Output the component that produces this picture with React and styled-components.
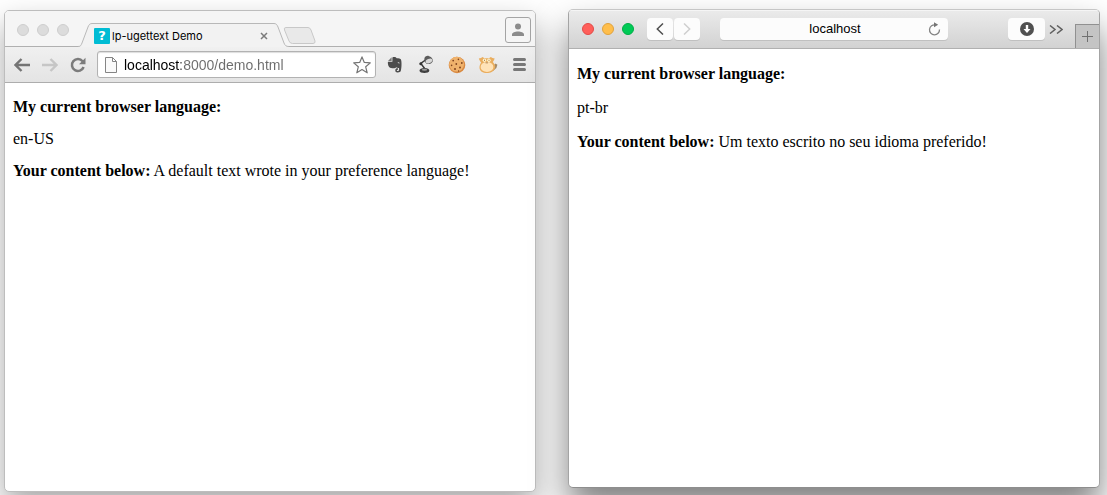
import React from 'react';
import styled, { createGlobalStyle } from 'styled-components';

const GlobalStyle = createGlobalStyle`
  *, *::before, *::after { box-sizing: border-box; }
  body { margin: 0; background: #fff; overflow: hidden; }
  button, input { font: inherit; }
  svg { display: block; flex: none; }
`;

const Desktop = styled.div`
  display: grid;
  grid-template-columns: 1fr 1fr;
  gap: 32px;
  min-height: 100vh;
  padding: 9px 7px 3px 4px;
`;

const BrowserWindow = styled.section`
  display: flex;
  flex-direction: column;
  min-width: 0;
  overflow: hidden;
  background: #fff;
  border: 1px solid #bdbdbd;
  border-radius: 5px;
`;

const ChromeWindow = styled(BrowserWindow)`
  margin-top: 1px;
  box-shadow: 0 14px 30px rgba(0, 0, 0, 0.34);
`;

const SafariWindow = styled(BrowserWindow)`
  margin-bottom: 4px;
  border-color: #c6c6c6 #a4a4a4 #8e8e8e;
  box-shadow: 0 20px 34px rgba(0, 0, 0, 0.5);
`;

const TabStrip = styled.div`
  display: flex;
  align-items: flex-end;
  height: 36px;
  background: #f5f5f5;
  box-shadow: inset 0 -1px #b0b0b0;
`;

const Lights = styled.div`
  display: flex;
  align-items: center;
  align-self: stretch;
  gap: 8px;
  flex: none;
`;

const ChromeLights = styled(Lights)`
  padding: 2px 9px 0 12px;
`;

const Light = styled.button`
  width: 12px;
  height: 12px;
  padding: 0;
  border: 1px solid ${(p) => p.$edge};
  border-radius: 50%;
  background: ${(p) => p.$fill};
`;

const Tab = styled.div`
  display: flex;
  height: 24px;
`;

const TabBody = styled.div`
  display: flex;
  align-items: center;
  width: 182px;
  padding: 0 6px 0 2px;
  border-top: 1px solid #b8b8b8;
  background: #f2f2f2;
  font: 11px/16px Inter, "Liberation Sans", sans-serif;
  color: #000;
`;

const Favicon = styled.span`
  width: 16px;
  height: 16px;
  margin-right: 2px;
  border-radius: 1px;
  background: #00bcd4;
  color: #fff;
  font: bold 13px/16px "DejaVu Sans", sans-serif;
  text-align: center;
`;

const IconButton = styled.button`
  display: flex;
  align-items: center;
  justify-content: center;
  flex: none;
  padding: 0;
  border: 0;
  background: none;
`;

const CloseTab = styled(IconButton)`
  margin-left: auto;
`;

const NewTab = styled(IconButton)`
  align-self: flex-end;
  margin: 0 0 3px -6px;
`;

const Profile = styled(IconButton)`
  align-self: center;
  width: 26px;
  height: 26px;
  margin: 1px 4px 0 auto;
  border: 1px solid #a4a4a4;
  border-radius: 3px;
`;

const Toolbar = styled.div`
  display: flex;
  align-items: center;
  height: 36px;
  padding: 0 1px 0 8px;
  background: linear-gradient(#f0f0f0, #e4e4e4);
  border-bottom: 1px solid #adadad;
`;

const Navigation = styled.div`
  display: flex;
  gap: 10px;
  margin-right: 10px;
`;

const NavButton = styled(IconButton)`
  width: 18px;
  height: 20px;
`;

const Omnibox = styled.label`
  display: flex;
  align-items: center;
  flex: 1;
  min-width: 0;
  height: 27px;
  padding: 0 4px 0 7px;
  border: 1px solid #b2b2b2;
  border-radius: 3px;
  background: #fff;
  box-shadow: inset 0 1px 1px #ddd;
`;

const UrlInput = styled.input`
  flex: 1;
  min-width: 0;
  margin-left: 7px;
  padding: 0;
  border: 0;
  outline: 0;
  font: 14px/20px "Liberation Sans", Arial, sans-serif;
  color: transparent;
  background: linear-gradient(to right, #000 57px, #6c6c6c 57px);
  background-clip: text;
`;

const Extensions = styled.div`
  display: flex;
  margin-left: 4px;
  gap: 1px;
`;

const ExtensionButton = styled(IconButton)`
  width: 30px;
  height: 24px;
`;

const Page = styled.main`
  flex: 1;
  padding: 0 8px;
  font: 16px/${(p) => p.$line} "Liberation Serif", "Times New Roman", serif;
  color: #000;

  p { margin: 16px 0; }
`;

const TitleBar = styled.div`
  display: flex;
  height: 39px;
  background: linear-gradient(#ebebeb, #d2d2d2);
  border-bottom: 1px solid #b0b0b0;
  box-shadow: inset 0 1px #f5f5f5;
`;

const Side = styled.div`
  display: flex;
  align-items: center;
  flex: 1;
  justify-content: ${(p) => p.$justify};
`;

const SafariLights = styled(Lights)`
  padding: 0 13px;
`;

const SafariButton = styled(IconButton)`
  width: ${(p) => p.$width};
  height: 22px;
  margin-right: 1px;
  border-radius: 4px;
  background: #fcfcfc;
  box-shadow: 0 1px #c0c0c0;
`;

const AddressBar = styled.div`
  display: flex;
  align-items: center;
  align-self: center;
  width: 43%;
  height: 22px;
  padding: 0 7px 0 22px;
  border-radius: 4px;
  background: #fcfcfc;
  box-shadow: 0 1px #c0c0c0;
`;

const AddressInput = styled.input`
  flex: 1;
  min-width: 0;
  padding: 0;
  border: 0;
  outline: 0;
  background: none;
  font: 13px/18px "Liberation Sans", Arial, sans-serif;
  color: #000;
  text-align: center;
`;

const MoreButton = styled(IconButton)`
  width: 20px;
  height: 22px;
  margin-right: 9px;
`;

const SafariNewTab = styled(IconButton)`
  align-self: flex-end;
  width: 24px;
  height: 24px;
  border: solid #909090;
  border-width: 1px 0 0 1px;
  background: #c4c4c4;
`;

function Arrow({ color, flip }) {
  return (
    <svg width="16" height="14" viewBox="0 0 16 14" fill="none" stroke={color} strokeWidth="2.4">
      <path d={flip ? 'M0 7H14M8.5 1l6 6-6 6' : 'M16 7H2M7.5 1l-6 6 6 6'} />
    </svg>
  );
}

function ReloadIcon() {
  return (
    <svg width="16" height="16" viewBox="0 0 16 16">
      <path d="M12.6 4.2A6 6 0 1 0 13.6 10" fill="none" stroke="#7c7c7c" strokeWidth="2.5" />
      <path d="M15.5 0.8V7.3H9z" fill="#7c7c7c" />
    </svg>
  );
}

function DocumentIcon() {
  return (
    <svg width="12" height="16" viewBox="0 0 12 16" fill="#fafafa" stroke="#858585">
      <path d="M.5.5h7l4 4v11H.5zM7.5.5v4h4" />
    </svg>
  );
}

function StarIcon() {
  return (
    <svg width="18" height="18" viewBox="0 0 18 18" fill="#fff" stroke="#757575" strokeWidth="1.2" strokeLinejoin="round">
      <path d="M9 .9l2.3 5.5 6 .5-4.6 3.9 1.5 6L9 13.6l-5.2 3.2 1.5-6L.7 6.9l6-.5z" />
    </svg>
  );
}

function ElephantIcon() {
  return (
    <svg width="16" height="18" viewBox="0 0 16 18">
      <path d="M4.6 1.2L1 5h3.6z" fill="#777" />
      <path d="M5.4 1.5c2-.9 3.6-.2 4.3.7 2 .1 3.8.2 4.3 1.4.7 2 .8 7.2-.1 11-.4 1.6-1.7 2-3.5 1.9-1.6-.1-2.2-1-2.1-2.3.1-1.4 1-2 2.7-1.8v1.3c-.9-.1-1.3.1-1.2.7.1.5.6.6 1.4.5.9-.2 1-1.5.8-3-.8.3-2 .1-2.8-.6-.7 1.1-3 1.1-5.2.7C1.500 11.7.7 8.5.9 5.8h4.5z" fill="#4c4c4c" />
      <path d="M10.5 7c.2-1.2 2-1.2 2.2.5-.6-.3-1.4-.4-2.2-.5z" fill="#ddd" />
    </svg>
  );
}

function LampIcon() {
  return (
    <svg width="17" height="19" viewBox="0 0 17 19">
      <path d="M7.500 5L2.800 8.500l4.200 5.500" fill="none" stroke="#383838" strokeWidth="1.5" />
      <circle cx="2.8" cy="8.7" r="1.5" fill="#333" />
      <path d="M6.3 4C6.5 1.500 9.500.2 11 1.2c2.500.5 4.300 3 3.700 5.200-.9 2.400-4.800 3.500-6.500 2C7.100 7.500 6.300 5.600 6.300 4z" fill="#5c5c5c" />
      <ellipse cx="11" cy="6" rx="3.5" ry="2.2" transform="rotate(-25 11 6)" fill="#d8d8d8" />
      <path d="M1.500 15.8c0-1.900 2-2.700 5-2.700s4.800.9 4.800 2.700c0 3-9.800 3-9.800 0z" fill="#404040" />
      <ellipse cx="6.500" cy="14.8" rx="2.7" ry="1" fill="#999" />
    </svg>
  );
}

function CookieIcon() {
  return (
    <svg width="18" height="18" viewBox="0 0 18 18">
      <circle cx="9" cy="9" r="8.3" fill="#d98a42" />
      <circle cx="8.600" cy="8.200" r="7.4" fill="#efb26c" />
      <g fill="#80451f">
        <circle cx="5.2" cy="4.6" r=".9" /><circle cx="10.4" cy="3.4" r=".8" />
        <circle cx="13.8" cy="7" r=".9" /><circle cx="8.3" cy="8" r=".9" />
        <circle cx="3.6" cy="9.4" r=".8" /><circle cx="12" cy="11.6" r="1" />
        <circle cx="7" cy="13" r="1" /><circle cx="10.600" cy="15" r=".7" />
      </g>
    </svg>
  );
}

function CatIcon() {
  return (
    <svg width="20" height="18" viewBox="0 0 20 18">
      <path d="M15 10l2.500-2.500 1.900 1.200-1 3.300-3.400 3z" fill="#a58b68" />
      <path d="M.8 2.500L3 2l1.500-1 2 1.200h4.500L12.800 1l1.700 1 2.200.5-.9 2-1 1.500c2 1.700 2.900 4 2 6.500-1 3-4.300 4.600-8 4.600-4 0-7.100-2-7.300-5.100-.1-2 .5-4 1.700-5.300L1.800 4.700z" fill="#eaae5f" />
      <ellipse cx="9" cy="11" rx="6.400" ry="5" fill="#ffe3b8" />
      <circle cx="6.500" cy="4.300" r="1.700" fill="#fff5d0" /><circle cx="10.900" cy="4.300" r="1.700" fill="#fff5d0" />
      <path d="M6 3.800h1v1H6zM10.500 3.800h1v1h-1zM7.500 6.500h2.600v.7H7.500z" fill="#9b672c" />
    </svg>
  );
}

function Chrome() {
  return (
    <ChromeWindow>
      <TabStrip>
        <ChromeLights>
          {['Close', 'Minimize', 'Zoom'].map((name) => (
            <Light key={name} aria-label={name} $fill="#dcdcdc" $edge="#cecece" />
          ))}
        </ChromeLights>
        <Tab>
          <svg width="14" height="24" viewBox="0 0 14 24">
            <path d="M0 24V23.5C3 23.5 3 22 4 20L10 4C11 1.5 12 .5 14 .5V24z" fill="#f2f2f2" />
            <path d="M0 23.5C3 23.5 3 22 4 20L10 4C11 1.5 12 .5 14 .5" fill="none" stroke="#b8b8b8" />
          </svg>
          <TabBody>
            <Favicon>?</Favicon>
            lp-ugettext Demo
            <CloseTab aria-label="Close tab">
              <svg width="8" height="8" viewBox="0 0 8 8" stroke="#7b7b7b" strokeWidth="1.5">
                <path d="M1 1l6 6M7 1L1 7" />
              </svg>
            </CloseTab>
          </TabBody>
          <svg width="15" height="24" viewBox="0 0 15 24">
            <path d="M0 24V.5C2 .5 3 1.5 4 4L10 20C11 22.5 12 23.5 15 23.5V24z" fill="#f2f2f2" />
            <path d="M0 .5C2 .5 3 1.5 4 4L10 20C11 22.5 12 23.5 15 23.5" fill="none" stroke="#b8b8b8" />
          </svg>
        </Tab>
        <NewTab aria-label="New tab">
          <svg width="33" height="17" viewBox="0 0 33 17">
            <path d="M3 .5H25Q27 .5 28 3L32 14Q32.500 16.500 30 16.500H9.500Q7 16.500 6 14L1.500 3Q.5 .5 3 .5z" fill="#e9e9e9" stroke="#c8c8c8" />
          </svg>
        </NewTab>
        <Profile aria-label="Profile">
          <svg width="12" height="13" viewBox="0 0 12 13" fill="#8c8c8c">
            <circle cx="6" cy="3.500" r="3" />
            <path d="M0 13v-1.500C0 9.500 3 8.500 6 8.500s6 1 6 3V13z" />
          </svg>
        </Profile>
      </TabStrip>
      <Toolbar>
        <Navigation>
          <NavButton aria-label="Back"><Arrow color="#757575" /></NavButton>
          <NavButton aria-label="Forward" disabled><Arrow color="#c6c6c6" flip /></NavButton>
          <NavButton aria-label="Reload"><ReloadIcon /></NavButton>
        </Navigation>
        <Omnibox>
          <DocumentIcon />
          <UrlInput aria-label="Address" defaultValue="localhost:8000/demo.html" />
          <IconButton aria-label="Bookmark"><StarIcon /></IconButton>
        </Omnibox>
        <Extensions>
          <ExtensionButton aria-label="Notes"><ElephantIcon /></ExtensionButton>
          <ExtensionButton aria-label="Lamp"><LampIcon /></ExtensionButton>
          <ExtensionButton aria-label="Cookies"><CookieIcon /></ExtensionButton>
          <ExtensionButton aria-label="Cat"><CatIcon /></ExtensionButton>
          <ExtensionButton aria-label="Menu">
            <svg width="13" height="13" viewBox="0 0 13 13" stroke="#777" strokeWidth="3" strokeLinecap="round">
              <path d="M1.500 1.500h10M1.500 6.500h10M1.500 11.500h10" />
            </svg>
          </ExtensionButton>
        </Extensions>
      </Toolbar>
      <Page $line="16px">
        <p><b>My current browser language:</b></p>
        <p>en-US</p>
        <p><b>Your content below:</b> A default text wrote in your preference language!</p>
      </Page>
    </ChromeWindow>
  );
}

function Safari() {
  return (
    <SafariWindow>
      <TitleBar>
        <Side $justify="flex-start">
          <SafariLights>
            <Light aria-label="Close" $fill="#ff5f5a" $edge="#e24b48" />
            <Light aria-label="Minimize" $fill="#ffbe4b" $edge="#e0a23d" />
            <Light aria-label="Zoom" $fill="#00ca56" $edge="#00ad46" />
          </SafariLights>
          <SafariButton aria-label="Back" $width="26px">
            <svg width="8" height="12" viewBox="0 0 8 12" fill="none" stroke="#505050" strokeWidth="1.500">
              <path d="M7 .5L1.300 6 7 11.500" />
            </svg>
          </SafariButton>
          <SafariButton aria-label="Forward" $width="26px" disabled>
            <svg width="8" height="12" viewBox="0 0 8 12" fill="none" stroke="#cfcfcf" strokeWidth="1.500">
              <path d="M1 .5L6.700 6 1 11.500" />
            </svg>
          </SafariButton>
        </Side>
        <AddressBar>
          <AddressInput aria-label="Address" defaultValue="localhost" />
          <IconButton aria-label="Reload">
            <svg width="13" height="14" viewBox="0 0 13 14">
              <path d="M7.500 2.900A5 5 0 1 0 11.500 7.500" fill="none" stroke="#858585" strokeWidth="1.300" />
              <path d="M6 .2l4.200 2.500L6 5.200z" fill="#757575" />
            </svg>
          </IconButton>
        </AddressBar>
        <Side $justify="flex-end">
          <SafariButton aria-label="Downloads" $width="37px">
            <svg width="14" height="14" viewBox="0 0 14 14">
              <circle cx="7" cy="7" r="7" fill="#505050" />
              <path d="M5.800 3h2.400v4h2.300L7 11 3.500 7h2.300z" fill="#fff" />
            </svg>
          </SafariButton>
          <MoreButton aria-label="More">
            <svg width="14" height="9" viewBox="0 0 14 9" fill="none" stroke="#606060" strokeWidth="1.500">
              <path d="M1 .5l5 4-5 4M8 .5l5 4-5 4" />
            </svg>
          </MoreButton>
          <SafariNewTab aria-label="New tab">
            <svg width="11" height="11" viewBox="0 0 11 11" stroke="#707070">
              <path d="M5.500 0v11M0 5.500h11" />
            </svg>
          </SafariNewTab>
        </Side>
      </TitleBar>
      <Page $line="18px">
        <p><b>My current browser language:</b></p>
        <p>pt-br</p>
        <p><b>Your content below:</b> Um texto escrito no seu idioma preferido!</p>
      </Page>
    </SafariWindow>
  );
}

export default function App() {
  return (
    <>
      <GlobalStyle />
      <Desktop>
        <Chrome />
        <Safari />
      </Desktop>
    </>
  );
}
